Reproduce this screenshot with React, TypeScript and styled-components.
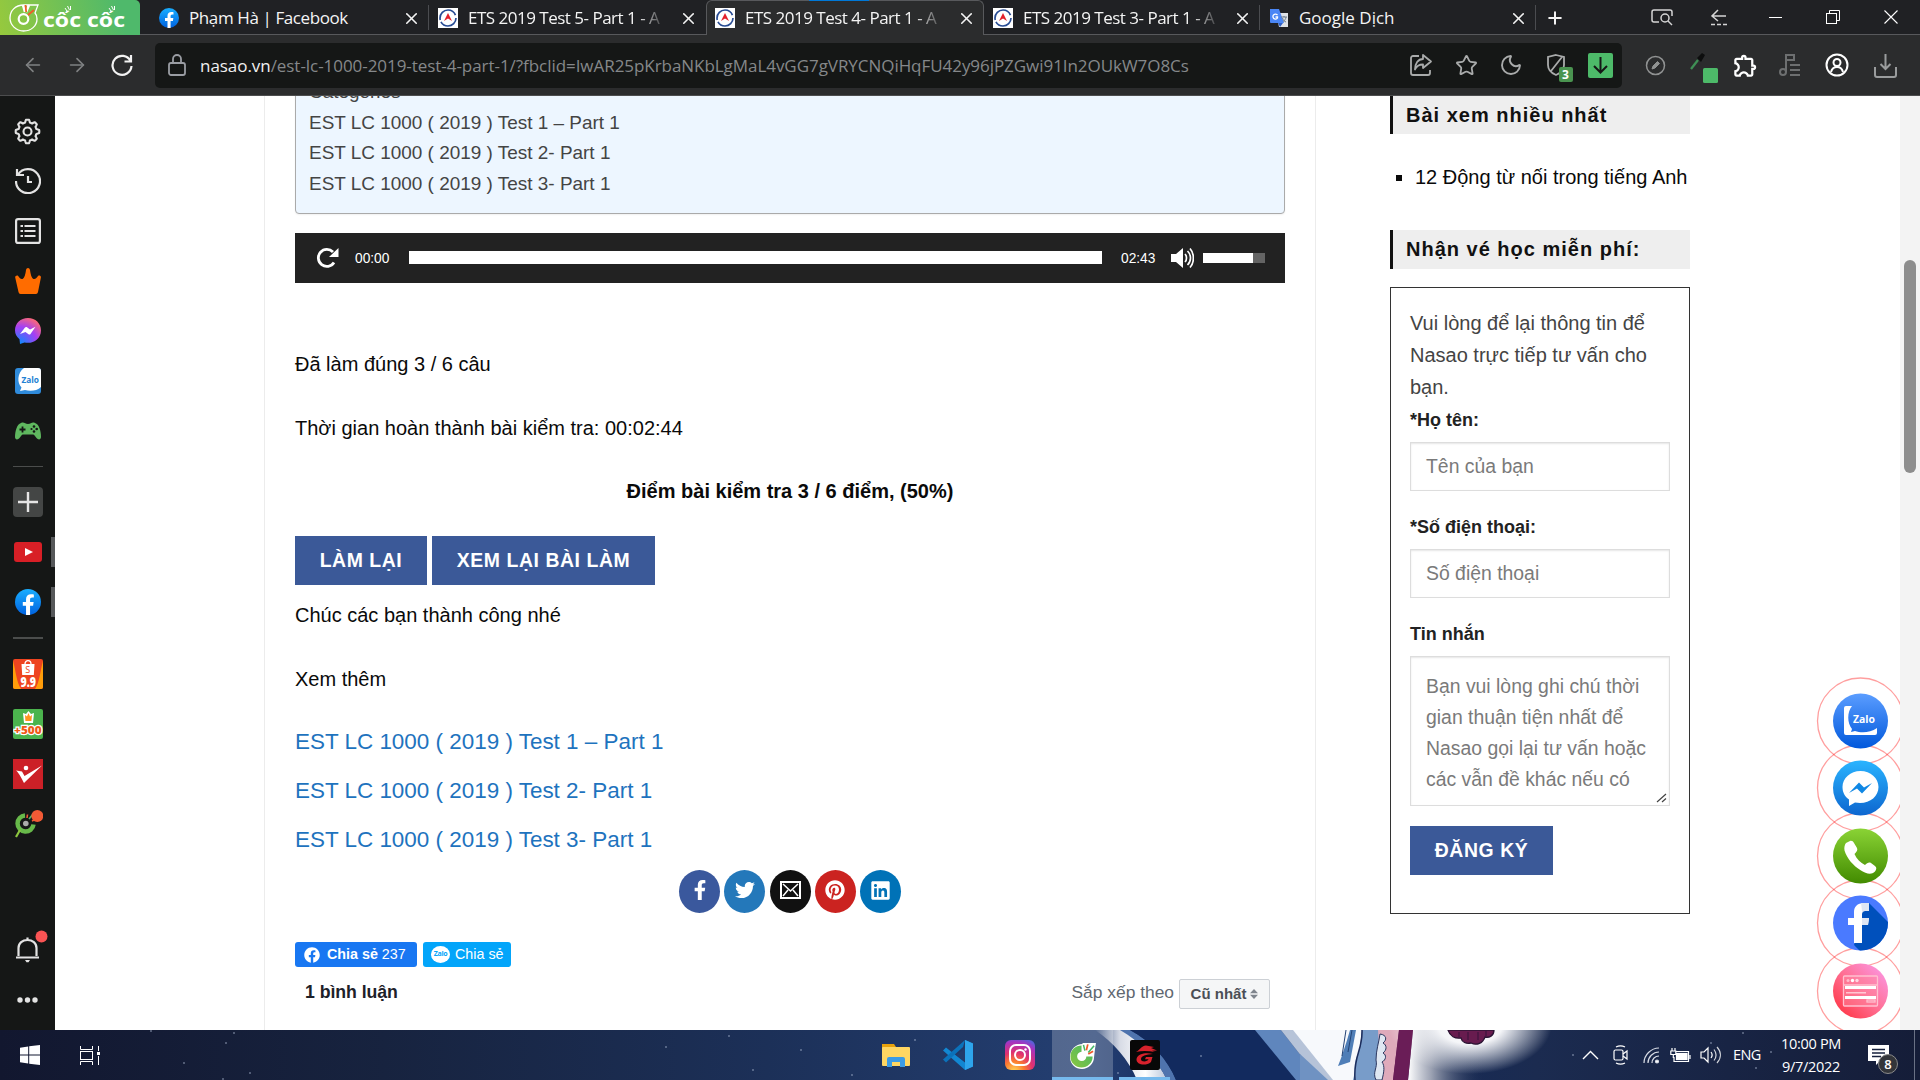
import React from "react";
import styled, { createGlobalStyle } from "styled-components";
import { FaFacebookF, FaTwitter, FaPinterest, FaLinkedin, FaFacebook } from "react-icons/fa";
import { MdOutlineExtension } from "react-icons/md";
import { Star, Moon, X, Plus, ArrowLeft, ArrowRight } from "lucide-react";

const ui = `"Open Sans", "Noto Sans", sans-serif`;
const page = `"Liberation Sans", Arial, sans-serif`;

const Global = createGlobalStyle`
  *, *::before, *::after { box-sizing: border-box; }
  html, body { margin: 0; padding: 0; overflow: hidden; background: #fff; }
  svg { display: block; flex: none; }
  a { text-decoration: none; color: inherit; }
`;

const Screen = styled.div`
  width: 1920px;
  height: 1080px;
  display: flex;
  flex-direction: column;
  overflow: hidden;
  font-family: ${page};
`;

/* ---------- tab strip ---------- */
const TabStrip = styled.header`
  height: 35px;
  display: flex;
  background: #202124;
  box-shadow: inset 0 -1px #58595c;
  flex: none;
`;
const Brand = styled.div`
  width: 140px;
  height: 35px;
  background: linear-gradient(75deg, #97c93d, #4fb96b 85%);
  border-top-right-radius: 5px;
  margin-right: 10px;
`;
const Tab = styled.div<{ $active?: boolean; $w?: number; $line?: boolean }>`
  width: ${p => p.$w ?? 277}px;
  height: 35px;
  display: flex;
  align-items: center;
  padding: ${p => (p.$active ? "0 7px 0 8px" : "1px 8px 0 9px")};
  color: #f4f4f4;
  font: 17px/28px ${ui};
  background: ${p => (p.$active ? "#2b2c2d" : "transparent")};
  border: solid #58595c;
  border-width: ${p => (p.$active ? "1px 1px 0 1px" : "0")};
  border-radius: ${p => (p.$active ? "6px 6px 0 0" : "0")};
  background-image: ${p => (p.$line ? "linear-gradient(#4b4c50, #4b4c50)" : "none")};
  background-size: 1px 25px;
  background-position: right 5px;
  background-repeat: no-repeat;
`;
const TabTitle = styled.span<{ $fade?: boolean; $ls?: number }>`
  flex: 1;
  margin: 0 10px 0 10px;
  overflow: hidden;
  white-space: nowrap;
  letter-spacing: ${p => p.$ls ?? -0.5}px;
  mask-image: ${p => (p.$fade ? "linear-gradient(90deg, #000 84%, transparent 99%)" : "none")};
`;
const LoadMark = styled.i`
  position: absolute;
  left: 809px;
  top: 0;
  width: 60px;
  height: 1px;
  background: #0078d7;
`;
const WindowButtons = styled.div`
  margin-left: auto;
  display: flex;
  align-items: center;
  padding: 0 22px 1px 0;
`;
const WinBtn = styled.span<{ $w: number }>`
  width: ${p => p.$w}px;
  display: flex;
  justify-content: flex-end;
`;

/* ---------- toolbar ---------- */
const Toolbar = styled.div`
  height: 61px;
  flex: none;
  display: flex;
  align-items: center;
  background: #2b2c2d;
  border-bottom: 1px solid #4c4d4e;
  color: #a9abab;
`;
const NavGroup = styled.div`
  width: 155px;
  display: flex;
  align-items: center;
  padding-left: 22px;
  gap: 22px;
`;
const Address = styled.div`
  width: 1467px;
  height: 45px;
  border-radius: 5px;
  background: #151716;
  display: flex;
  align-items: center;
  padding: 0 9px 0 13px;
`;
const Url = styled.div`
  flex: 1;
  margin-left: 14px;
  font: 17px/24px ${ui};
  padding-top: 1px;
  letter-spacing: -0.05px;
  color: #85888a;
  white-space: nowrap;
  b { font-weight: 400; color: #f0f0f0; }
`;
const AddressIcons = styled.div`
  display: flex;
  align-items: center;
  gap: 21.5px;
`;
const Extensions = styled.div`
  display: grid;
  grid-template-columns: 46px 44px 46px 44px 50px 46px;
  align-items: center;
  justify-items: center;
  padding-left: 10px;
`;
const Badged = styled.span`
  position: relative;
  display: block;
  padding: 0 1px;
`;
const CountBadge = styled.span`
  position: absolute;
  left: 14px;
  top: 14px;
  width: 14px;
  height: 15px;
  border-radius: 2px;
  background: #4a9450;
  color: #fff;
  font: 700 12px/15px ${ui};
  text-align: center;
`;
const GreenChip = styled.span`
  width: 25px;
  height: 25px;
  border-radius: 2px;
  background: #4dba69;
  display: grid;
  place-items: center;
`;

/* ---------- middle ---------- */
const Middle = styled.div`
  height: 934px;
  display: flex;
  flex: none;
  overflow: hidden;
`;
const SideRail = styled.nav`
  width: 55px;
  flex: none;
  background: #151716;
  padding: 10px 0 5px;
  display: flex;
  flex-direction: column;
  align-items: center;
`;
const RailCell = styled.div<{ $mark?: boolean }>`
  width: 55px;
  height: 50px;
  display: grid;
  place-items: center;
  background: ${p => (p.$mark ? "linear-gradient(#56585a, #56585a) right center / 4px 30px no-repeat" : "none")};
  flex: none;
`;
const RailRule = styled.div<{ $h: number; $t: number }>`
  height: ${p => p.$h}px;
  width: 30px;
  background: linear-gradient(#4b4d4c, #4b4d4c) center / 30px ${p => p.$t}px no-repeat;
`;
const RailGap = styled.div`
  flex: 1;
`;
const PlusTile = styled.span`
  width: 30px;
  height: 30px;
  border-radius: 4px;
  background: #444645;
  display: grid;
  place-items: center;
`;
const PageView = styled.main`
  flex: 1;
  display: flex;
  background: #fff;
  overflow: hidden;
  position: relative;
`;
const Article = styled.article`
  margin-left: 209px;
  width: 1052px;
  height: 934px;
  border: solid #ececec;
  border-width: 0 1px;
  padding: 0 30px;
  color: #0a0a0a;
  font-size: 20px;
  line-height: 32px;
  overflow: hidden;
  flex: none;
`;
const Toc = styled.div`
  width: 990px;
  height: 147px;
  margin-top: -29px;
  padding: 9.300px 13px;
  background: #edf6ff;
  border: 1px solid #aaa;
  border-radius: 4px;
  color: #444;
  font-size: 18.95px;
  line-height: 30.4px;
  box-shadow: 0 1px 2px rgba(0, 0, 0, 0.06);
`;
const TocLine = styled.a`
  display: block;
`;
const Player = styled.div`
  height: 50px;
  width: 990px;
  margin-top: 19px;
  background: #222;
  display: flex;
  align-items: center;
  padding: 0 20px 0 21px;
  color: #fff;
  font-size: 13.75px;
`;
const Time = styled.span<{ $ml: number }>`
  margin-left: ${p => p.$ml}px;
  padding-top: 2px;
  width: 35px;
  flex: none;
`;
const Track = styled.span`
  height: 13px;
  flex: 1;
  margin: 0 0 1px 19px;
  background: #fff;
`;
const Speaker = styled.svg`
  margin-left: 15px;
`;
const Volume = styled.span`
  width: 62px;
  height: 10px;
  margin-left: 9px;
  background: linear-gradient(90deg, #fff 50px, #646464 50px);
`;
const Para = styled.p<{ $mt: number; $strong?: boolean }>`
  margin: ${p => p.$mt}px 0 0;
  font-weight: ${p => (p.$strong ? 700 : 400)};
  text-align: ${p => (p.$strong ? "center" : "left")};
`;
const Buttons = styled.div<{ $mt: number }>`
  display: flex;
  gap: 5px;
  margin-top: ${p => p.$mt}px;
`;
const Button = styled.button<{ $w: number }>`
  width: ${p => p.$w}px;
  height: 49px;
  padding: 0;
  border: 0;
  background: #3b5998;
  color: #fff;
  font: 700 19.4px/47px ${page};
  letter-spacing: 0.58px;
  text-transform: uppercase;
  white-space: nowrap;
`;
const PostLinks = styled.div`
  margin-top: 22px;
`;
const PostLink = styled.a`
  display: block;
  color: #1e73be;
  font-size: 22.45px;
  line-height: 49px;
`;
const ShareRow = styled.div`
  display: flex;
  justify-content: center;
  gap: 4.2px;
  margin-top: 6px;
`;
const Round = styled.a<{ $bg: string }>`
  width: 41px;
  height: 43px;
  border-radius: 50%;
  background: ${p => p.$bg};
  display: grid;
  place-items: center;
  color: #fff;
  padding-bottom: 3px;
`;
const SmallShares = styled.div`
  display: flex;
  gap: 6px;
  margin-top: 29px;
`;
const SmallShare = styled.a<{ $bg: string; $w: number }>`
  width: ${p => p.$w}px;
  height: 25px;
  border-radius: 3px;
  padding-left: 9px;
  background: ${p => p.$bg};
  color: #fff;
  display: flex;
  align-items: center;
  font-size: 14.3px;
  line-height: 25px;
  white-space: nowrap;
  gap: 7px;
`;
const ZaloBubble = styled.span<{ $s: number }>`
  width: ${p => p.$s}px;
  height: ${p => p.$s * 0.86}px;
  margin-left: -1px;
  margin-right: -2px;
  border-radius: 50%;
  background: #fff;
  color: #03a5fa;
  font: 700 ${p => p.$s * 0.37}px/${p => p.$s * 0.84}px ${ui};
  text-align: center;
  letter-spacing: -0.3px;
`;
const Comments = styled.div`
  display: flex;
  align-items: center;
  margin-top: 12px;
  height: 30px;
  padding: 0 15px 0 10px;
  color: #1d2129;
`;
const CommentCount = styled.span`
  font-size: 17.7px;
  font-weight: 700;
  letter-spacing: -0.05px;
  padding-bottom: 4px;
`;
const Sort = styled.span`
  margin-left: auto;
  color: #606770;
  font-size: 17.4px;
  padding-bottom: 4px;
`;
const SortSelect = styled.span`
  width: 91px;
  height: 30px;
  margin-left: 5px;
  border: 1px solid #ccd0d5;
  border-radius: 2px;
  background: #f5f6f7;
  color: #4b4f56;
  font: 700 15px/28px ${page};
  display: flex;
  align-items: center;
  justify-content: center;
  gap: 4px;
`;

/* ---------- right column ---------- */
const Aside = styled.aside`
  margin-left: 74px;
  width: 300px;
  flex: none;
  color: #0a0a0a;
`;
const WidgetTitle = styled.h3<{ $mt: number; $lh: number }>`
  margin: ${p => p.$mt}px 0 0;
  height: 39px;
  padding-left: 13px;
  border-left: 3px solid #111;
  background: #eee;
  font: 700 20px/${p => p.$lh}px ${page};
  letter-spacing: 1px;
  color: #111;
  white-space: nowrap;
`;
const BulletList = styled.ul`
  list-style: none;
  margin: 27px 0 0;
  padding: 0 0 0 6px;
  font-size: 20px;
  line-height: 32px;
`;
const Bullet = styled.li`
  display: flex;
  align-items: center;
  white-space: nowrap;
  &::before {
    content: "";
    width: 6px;
    height: 6px;
    margin-right: 13px;
    margin-top: 2px;
    background: #0a0a0a;
  }
`;
const SignUp = styled.form`
  height: 627px;
  margin-top: 18px;
  padding: 19px 19px 0;
  border: 1px solid #333;
  color: #444;
  font-size: 20px;
  line-height: 32px;
`;
const Intro = styled.p`
  margin: 0;
  white-space: nowrap;
`;
const Label = styled.label<{ $mt: number }>`
  display: block;
  margin-top: ${p => p.$mt}px;
  color: #222;
  font-weight: 700;
  font-size: 18px;
  line-height: 28px;
`;
const Field = styled.div`
  height: 49px;
  width: 260px;
  margin-top: 8px;
  padding: 0 15px;
  border: 1px solid #ddd;
  box-shadow: inset 0 1px 2px rgba(0, 0, 0, 0.1);
  color: #7a7a7a;
  font-size: 19.4px;
  line-height: 47px;
`;
const MessageField = styled(Field)`
  height: 150px;
  padding: 14px 15px;
  line-height: 31px;
  white-space: nowrap;
  position: relative;
  svg { position: absolute; right: 2px; bottom: 2px; }
`;
const ScrollTrack = styled.div`
  width: 20px;
  height: 934px;
  margin-left: auto;
  background: #f3f3f3;
  padding: 164px 4px 0;
  z-index: 2;
`;
const ScrollThumb = styled.div`
  height: 213px;
  border-radius: 6px;
  background: #8d8d8d;
`;

/* floating contact buttons lie over the page */
const Contacts = styled.div`
  position: absolute;
  right: 20px;
  top: 580.5px;
  width: 84px;
  height: 354px;
  overflow: hidden;
`;

/* ---------- taskbar ---------- */
const Taskbar = styled.footer`
  height: 50px;
  flex: none;
  position: relative;
  display: flex;
  align-items: center;
  background: #16203c;
  color: #fff;
`;
const Wallpaper = styled.svg`
  position: absolute;
  inset: 0;
`;
const StartArea = styled.div`
  z-index: 1;
  display: flex;
  align-items: center;
  gap: 40px;
  padding-left: 20px;
  width: 865px;
`;
const Apps = styled.div`
  z-index: 1;
  display: flex;
  height: 50px;
`;
const AppSlot = styled.span<{ $on?: boolean; $w?: number; $ml?: number; $open?: boolean }>`
  width: ${p => p.$w ?? 62}px;
  margin-left: ${p => p.$ml ?? 0}px;
  height: 50px;
  display: grid;
  place-items: center;
  padding-top: ${p => (p.$on || p.$open ? "3px" : "0")};
  background: ${p => (p.$on ? "rgba(255,255,255,0.22)" : "transparent")};
  border-bottom: ${p => (p.$on || p.$open ? "3px solid #76b9ed" : "0")};
`;
const Tray = styled.div`
  z-index: 1;
  height: 50px;
  margin-left: auto;
  display: flex;
  align-items: center;
  font: 14.5px/24px ${ui};
  padding-right: 5px;
`;
const TrayIcon = styled.span<{ $w: number }>`
  width: ${p => p.$w}px;
  display: flex;
  justify-content: center;
`;
const Lang = styled.span`
  width: 30px;
  margin-left: 8px;
  letter-spacing: -0.6px;
`;
const Clock = styled.span`
  width: 72px;
  margin: 0 0 0 12px;
  text-align: center;
  line-height: 23px;
  letter-spacing: -0.3px;
  white-space: nowrap;
`;
const Notice = styled.span`
  position: relative;
  width: 46px;
  margin-left: 21px;
`;
const NoticeCount = styled.span`
  position: absolute;
  left: 10px;
  top: 9px;
  width: 20px;
  height: 20px;
  border-radius: 50%;
  border: 1px solid #8b8b8b;
  background: #33353a;
  font: 600 13px/18px ${ui};
  text-align: center;
`;
const DesktopEdge = styled.i`
  width: 1px;
  height: 50px;
  background: #6a7185;
`;

/* ---------- drawings ---------- */
const BrandLogo = () => (
  <svg width="140" height="35" viewBox="0 0 140 35" fill="none">
    <path d="M33 5H24C15 5 10 11 10 18s6 13 13.500 13S37 26 37 19c0-3-1-5-2-6l3-8z" stroke="#fff" strokeWidth="1.300" />
    <circle cx="23.500" cy="19" r="4.800" stroke="#fff" strokeWidth="2.200" />
    <path d="M23 5l2 7M29 5l-3 7" stroke="#fff" strokeWidth="2.600" />
    <path d="M25.500 5l.7 7M34 10l-6 5" stroke="#f15a29" strokeWidth="1.800" />
    <path d="M65 8l2 3M67.500 6l2 4M70.500 6l0 4M109 8l2 3M111.500 6l2 4M114.500 6l0 4" stroke="#fff" strokeWidth="1" />
    <text x="43" y="27" fill="#fff" fontFamily="Open Sans" fontWeight="700" fontSize="19" textLength="82" lengthAdjust="spacingAndGlyphs">cốc cốc</text>
  </svg>
);

const FbDisc = ({ s = 20 }: { s?: number }) => (
  <svg width={s} height={s} viewBox="0 0 24 24">
    <defs>
      <linearGradient id="fbg" x1="0" y1="0" x2="0" y2="1"><stop stopColor="#19aeff" /><stop offset="1" stopColor="#0062e0" /></linearGradient>
    </defs>
    <circle cx="12" cy="12" r="12" fill="url(#fbg)" />
    <path d="M16.700 15.500l.5-3.500h-3.300V9.800c0-1 .5-1.900 2-1.900h1.500V5s-1.400-.2-2.700-.2c-2.700 0-4.500 1.600-4.500 4.600V12H7.200v3.500h3V24h3.700v-8.500z" fill="#fff" />
  </svg>
);

const EtsIcon = () => (
  <svg width="20" height="20" viewBox="0 0 20 20">
    <rect width="20" height="20" fill="#fff" />
    <circle cx="10" cy="10" r="8" fill="none" stroke="#274b93" strokeWidth="1.700" strokeDasharray="21 2 24 3" />
    <path d="M10 5l4 8-4-2.500L6 13z" fill="#e3202b" />
  </svg>
);

const TranslateIcon = () => (
  <svg width="20" height="20" viewBox="0 0 20 20">
    <path d="M7 5h12v14H10z" fill="#dfe2e6" />
    <path d="M1 1h9l5 14H2a1 1 0 01-1-1z" fill="#4a86f5" />
    <path d="M9 15h5l-3 4z" fill="#2f5fc4" />
    <path d="M8.500 7.200A2.500 2.500 0 108.500 10V9H6.500" stroke="#fff" fill="none" strokeWidth="1.300" />
    <path d="M12 9h6M15 8v1M17 9c0 2-2 4-3 4.500M13.500 10c.5 2 2 3.500 3.500 4" stroke="#6c7a89" fill="none" />
  </svg>
);

const gearPath = Array.from({ length: 96 }, (_, i) => {
  const a = (i / 96) * Math.PI * 2;
  const wave = Math.max(-1, Math.min(1, Math.cos(a * 8) * 1.9));
  const r = 10.5 + wave * 1.3;
  return `${i ? "L" : "M"}${(13.5 + r * Math.sin(a)).toFixed(2)} ${(13.5 - r * Math.cos(a)).toFixed(2)}`;
}).join("") + "Z";

const Gear = () => (
  <svg width="27" height="27" viewBox="0 0 27 27" fill="none" stroke="#e3e3e3" strokeWidth="2.100" strokeLinejoin="round">
    <path d={gearPath} />
    <circle cx="13.500" cy="13.500" r="4" />
  </svg>
);

const Messenger = ({ s, id, a, b, c }: { s: number; id: string; a: string; b: string; c: string }) => (
  <svg width={s} height={s} viewBox="0 0 26 26">
    <defs>
      <radialGradient id={id} cx=".2" cy="1" r="1.100"><stop stopColor={a} /><stop offset=".6" stopColor={b} /><stop offset="1" stopColor={c} /></radialGradient>
    </defs>
    <path d="M13 0C5.500 0 0 5.400 0 12.300 0 16 1.700 19 4.500 21.200L5 26l4.500-1.600c8 2 16.500-3.500 16.500-12C26 5.400 20.500 0 13 0z" fill={`url(#${id})`} />
    <path d="M5 16l5-6.500c.5-.6 1.300-.7 2-.2l3 2.300L20.500 8.700 15.500 16c-.5.600-1.300.7-2 .2l-3-2.300z" fill="#fff" />
  </svg>
);

const ZaloTile = () => (
  <svg width="26" height="26" viewBox="0 0 26 26">
    <rect width="26" height="26" rx="3" fill="#2f8bdb" />
    <path d="M9 0h14a3 3 0 013 3v16c-4 4-11 4.500-16 3l-5 1 1.500-3.500C2 15 2 5 9 0z" fill="#fff" />
    <text x="6.500" y="14.500" fontFamily="Open Sans" fontWeight="700" fontSize="8.500" fill="#2381d3" textLength="17.500" lengthAdjust="spacingAndGlyphs">Zalo</text>
  </svg>
);

const CocMark = ({ s }: { s: number }) => (
  <svg width={s} height={s} viewBox="0 0 28 28" fill="none">
    <defs>
      <linearGradient id="coc" x1="0" y1="1" x2="1" y2="0"><stop stopColor="#8cc63f" /><stop offset="1" stopColor="#45b864" /></linearGradient>
    </defs>
    <path d="M14 2C7 2 1 8 1 15.500S7 28 13.500 28 26 22.500 26 15.500l1-8.500 1-6H14z" fill="#fff" />
    <path d="M13 3.500A11.500 11.500 0 1024.500 15H18a4.800 4.800 0 11-5-4.800z" fill="url(#coc)" />
    <path d="M15 3l1.500 6M26 4l-6 7" stroke="#45b864" strokeWidth="1.600" />
    <path d="M19.500 2.500l-1.500 6M25 9.500l-5 3" stroke="#f15a29" strokeWidth="1.800" />
  </svg>
);

const ContactButtons = () => {
  const ys = [44, 111, 179, 246, 314];
  return (
    <svg width="84" height="354" viewBox="0 0 84 354">
      <defs>
        <linearGradient id="c0" x1="0" y1="0" x2="0" y2="1"><stop stopColor="#5b9dff" /><stop offset="1" stopColor="#0058dc" /></linearGradient>
        <linearGradient id="c1" x1="0" y1="0" x2="0" y2="1"><stop stopColor="#2ab4ff" /><stop offset="1" stopColor="#0d66cf" /></linearGradient>
        <linearGradient id="c2" x1="0" y1="0" x2="0" y2="1"><stop stopColor="#8ad335" /><stop offset="1" stopColor="#428b00" /></linearGradient>
        <linearGradient id="c3"><stop stopColor="#4a7aff" /><stop offset="1" stopColor="#4a7aff" /></linearGradient>
        <linearGradient id="c4" x1="1" y1="0" x2="0" y2="1"><stop stopColor="#fb9df0" /><stop offset=".5" stopColor="#ff6f93" /><stop offset="1" stopColor="#ff2b36" /></linearGradient>
        <clipPath id="fbclip"><circle cx="44.500" cy="246" r="27.500" /></clipPath>
      </defs>
      {ys.map(y => <circle key={y} cx="44.500" cy={y} r="43" fill="none" stroke="#ff0000" strokeOpacity=".38" strokeWidth="1.300" />)}
      {ys.map((y, i) => <circle key={y} cx="44.500" cy={y} r="27.500" fill={`url(#c${i})`} />)}
      <path d="M36 29h-6a2 2 0 00-2 2v25a2 2 0 002 2h29a2 2 0 002-2v-5c-7 5-16 5-22 3l-4 1 1-3c-5-6-5-17 0-23z" fill="#fff" />
      <text x="37" y="46" fill="#fff" fontFamily="Open Sans" fontWeight="700" fontSize="11" textLength="22" lengthAdjust="spacingAndGlyphs">Zalo</text>
      <path d="M44.500 94c-10 0-18 7-18 16 0 5 2 9.500 6.500 12.500V129l6-3.500c13 2.500 23.500-5 23.500-15.500 0-9-8-16-18-16z" fill="#fff" />
      <path d="M33 116l10-10.500 5 5 8-4.500-10 10.500-5-5z" fill="#0f87e4" />
      <path d="M30 166l4-2c2-.5 3 .5 4 2l3 5c1 2-.5 4-2.500 6 2 5 6 8.500 10.500 11 2-2 4-3 6-2l4 3c2 1.500 1.500 3.500 0 5.500-4 4-9 2-14-1-8-5-14-12-16.500-20-.5-3 0-5.500 1.500-7.500z" fill="#fff" />
      <g clipPath="url(#fbclip)">
        <path d="M53 226l20 20v30H46l-8-8 7-21-12-1z" fill="#0050bc" />
      </g>
      <path d="M53 226h-5c-7 0-10 4-10 9v6h-6v7h6v18h8v-18h6l1-7h-7v-4c0-2 1-3 3-3h4z" fill="#fff" />
      <path d="M45 226h8v8h-4c-2 0-3 1-3 3v4h7l-1 7h-6V234z" fill="#dfe6f3" />
      <g fill="none" stroke="#ffc0cf" strokeWidth="1.300">
        <rect x="27.500" y="299" width="34" height="30" rx="1" fill="#ff8ba3" fillOpacity=".4" />
        <path d="M28 308h33" />
        <rect x="51" y="323" width="8" height="2" />
      </g>
      <g fill="#fff"><rect x="29" y="309" width="31" height="3" /><rect x="29" y="319" width="31" height="3" /><circle cx="36.500" cy="303.500" r="1.700" /><circle cx="32" cy="303.500" r="1.500" opacity=".5" /><circle cx="41" cy="303.500" r="1.700" opacity=".7" /><rect x="30" y="315" width="20" height="1.500" opacity=".6" /></g>
    </svg>
  );
};

const stars = [[151, 1], [234, 3], [226, 13], [184, 33], [250, 43], [223, 49], [666, 17], [753, 40], [801, 20], [729, 6], [852, 45], [915, 10], [1118, 43], [1201, 26], [1711, 13], [1743, 3], [1771, 22], [1573, 25], [1756, 38]];

const WallpaperArt = () => (
  <Wallpaper width="1920" height="50" viewBox="0 0 1920 50">
    <defs>
      <linearGradient id="sky"><stop stopColor="#12172f" /><stop offset=".2" stopColor="#17233f" /><stop offset=".4" stopColor="#1c3058" /><stop offset=".57" stopColor="#243f72" /><stop offset=".62" stopColor="#14295c" /><stop offset=".7" stopColor="#13295a" /><stop offset=".8" stopColor="#1b2b50" /><stop offset="1" stopColor="#151d38" /></linearGradient>
      <linearGradient id="beam"><stop stopColor="#fff" stopOpacity="0" /><stop offset=".35" stopColor="#d8dce6" /><stop offset=".7" stopColor="#fff" /><stop offset="1" stopColor="#b9c6db" /></linearGradient>
      <linearGradient id="haze"><stop stopColor="#fff" /><stop offset=".3" stopColor="#b4b8c4" stopOpacity=".85" /><stop offset="1" stopColor="#1b2b50" stopOpacity="0" /></linearGradient>
      <radialGradient id="glow"><stop stopColor="#fff" /><stop offset=".4" stopColor="#f4f5f8" /><stop offset="1" stopColor="#fff" stopOpacity="0" /></radialGradient>
    </defs>
    <rect width="1920" height="50" fill="url(#sky)" />
    <path d="M1095 0h28c20 14 36 32 44 50h-30c-8-20-24-38-42-50z" fill="url(#beam)" />
    <path d="M1120 0h10c22 12 38 30 46 50h-9c-10-20-26-38-47-50z" fill="#4f74ae" />
    <path d="M1130 0h125l45 50h-124c-8-20-24-38-46-50z" fill="#122a5e" />
    <path d="M1255 0h26l39 50h-24z" fill="#5f86bd" />
    <path d="M1281 0h81l-6 50h-36z" fill="#f7f9fc" />
    <path d="M1281 0h12l40 50h-13z" fill="#3d5f96" opacity=".35" />
    <path d="M1300 24l28 26h-28z" fill="#6f92c2" />
    <path d="M1350 0c-4 14-8 26-12 36l12-4 6-32z" fill="#4f7eb7" />
    <path d="M1346 0l-4 26M1352 0l-4 22" stroke="#234274" fill="none" />
    <path d="M1362 0h22l-4 50h-27c3-10 0-14 4-24 4-8 4-14 5-26z" fill="#789cc9" />
    <path d="M1362 0c1 20-9 26-7 50" stroke="#1c2d5c" strokeWidth="1.500" fill="none" />
    <path d="M1378 0h24l-6 50h-15z" fill="#dfaabb" />
    <path d="M1380 4c7 1 7 6 3 9 4 2 4 7 0 10 4 2 3 7-1 9 3 4 2 10 0 18h-6c-4-8 2-12 0-20 0-10 3-18 4-26z" fill="#dfe7f2" stroke="#2a365f" />
    <path d="M1399 0h14l-5 50h-15z" fill="#6a1d57" />
    <path d="M1413 0h72v50h-77z" fill="url(#haze)" />
    <ellipse cx="1470" cy="-6" rx="82" ry="50" fill="url(#glow)" />
    <path d="M1399 0h14l-5 50h-15z" fill="#6a1d57" />
    <path d="M1448 0h46c0 6-5 8-9 7-2 6-8 9-14 6-5 1-9-1-10-5-6 1-11-2-13-8z" fill="#681c4f" stroke="#2b1434" strokeWidth="1.300" />
    <path d="M1459 2v5M1468 2v8M1478 2v8M1486 1v5" stroke="#35123a" fill="none" />
    {stars.map(([x, y]) => (
      <circle key={`${x}-${y}`} cx={x} cy={y} r="1" fill="#b6c3dc" opacity=".5" />
    ))}
  </Wallpaper>
);

const LockIcon = () => (
  <svg width="18" height="22" viewBox="0 0 18 22" fill="none" stroke="#9a9da3" strokeWidth="1.800"><rect x="1" y="9" width="16" height="12" rx="2" /><path d="M5 9V5a4 4 0 018 0v4" /></svg>
);
const Person = () => (
  <svg width="24" height="24" viewBox="0 0 24 24" fill="none" stroke="#fff" strokeWidth="2"><circle cx="12" cy="12" r="10.500" /><circle cx="12" cy="9.500" r="3.500" /><path d="M6 19c1-4 3-5 6-5s5 1 6 5" /></svg>
);
const CloseX = () => <X size={19} strokeWidth={2} />;

const tests = ["EST LC 1000 ( 2019 ) Test 1 – Part 1", "EST LC 1000 ( 2019 ) Test 2- Part 1", "EST LC 1000 ( 2019 ) Test 3- Part 1"];

export default function App() {
  return (
    <Screen>
      <Global />
      <TabStrip>
        <Brand><BrandLogo /></Brand>
        <Tab $line $w={279}><FbDisc /><TabTitle $ls={-0.4}>Phạm Hà | Facebook</TabTitle><CloseX /></Tab>
        <Tab><EtsIcon /><TabTitle $fade>ETS 2019 Test 5- Part 1 - A</TabTitle><CloseX /></Tab>
        <Tab $active $w={278}><EtsIcon /><TabTitle $fade>ETS 2019 Test 4- Part 1 - A</TabTitle><CloseX /></Tab>
        <Tab $line $w={276}><EtsIcon /><TabTitle $fade>ETS 2019 Test 3- Part 1 - A</TabTitle><CloseX /></Tab>
        <Tab $line $w={276}><TranslateIcon /><TabTitle $ls={0}>Google Dịch</TabTitle><CloseX /></Tab>
        <Tab $w={40}><Plus size={20} strokeWidth={2.4} /></Tab>
        <LoadMark />
        <WindowButtons>
          <WinBtn $w={24}><svg width="22" height="17" viewBox="0 0 22 17" fill="none" stroke="#d5d5d5" strokeWidth="1.500"><path d="M8 13H3a2 2 0 01-2-2V3a2 2 0 012-2h16a2 2 0 012 2v4" /><circle cx="14" cy="9" r="4" /><path d="M17 12l4 4" /></svg></WinBtn>
          <WinBtn $w={55}><svg width="18" height="17" viewBox="0 0 18 17" fill="none" stroke="#d5d5d5" strokeWidth="1.500"><path d="M16 7H2M8 1L2 7l6 5" /><path d="M1 15.500h4M7 15.500h4M13 15.500h4" /></svg></WinBtn>
          <WinBtn $w={54}><svg width="13" height="13" viewBox="0 0 13 13"><path d="M0 6.500h13" stroke="#fff" /></svg></WinBtn>
          <WinBtn $w={58}><svg width="14" height="14" viewBox="0 0 14 14" fill="none" stroke="#fff"><rect x=".5" y="3.500" width="10" height="10" /><path d="M3.500 3V.5h10v10H11" /></svg></WinBtn>
          <WinBtn $w={58}><svg width="14" height="14" viewBox="0 0 14 14" stroke="#fff" strokeWidth="1.100"><path d="M.5.5l13 13M13.500.5l-13 13" /></svg></WinBtn>
        </WindowButtons>
      </TabStrip>
      <Toolbar>
        <NavGroup>
          <ArrowLeft size={22} strokeWidth={1.8} color="#7f8182" />
          <ArrowRight size={22} strokeWidth={1.8} color="#7f8182" />
          <svg width="24" height="24" viewBox="0 0 24 24" fill="none" stroke="#f2f2f2" strokeWidth="2.200"><path d="M20.500 8A9.500 9.500 0 1021.500 13M21 2v6.500h-6.500" /></svg>
        </NavGroup>
        <Address>
          <LockIcon />
          <Url><b>nasao.vn</b>/est-lc-1000-2019-test-4-part-1/?fbclid=IwAR25pKrbaNKbLgMaL4vGG7gVRYCNQiHqFU42y96jPZGwi91In2OUkW7O8Cs</Url>
          <AddressIcons>
            <svg width="24" height="24" viewBox="0 0 24 24" fill="none" stroke="#a9abab" strokeWidth="1.800"><path d="M10 3H4a2 2 0 00-2 2v15a2 2 0 002 2h15a2 2 0 002-2v-3" /><path d="M14 2l8 6.500-8 6.500v-3.500c-4 0-6.500 1.500-8 5 0-6 3-10.500 8-10.500z" strokeLinejoin="round" /></svg>
            <Star size={23} strokeWidth={1.9} />
            <Moon size={24} strokeWidth={1.9} />
            <Badged>
              <svg width="20" height="24" viewBox="0 0 20 24" fill="none" stroke="#a9abab" strokeWidth="1.800"><path d="M10 2l8 2v8c0 4-3 8-8 10-5-2-8-6-8-10V4zM16 4L5 18" /></svg>
              <CountBadge>3</CountBadge>
            </Badged>
            <GreenChip><svg width="15" height="18" viewBox="0 0 15 18" fill="none" stroke="#151716" strokeWidth="2"><path d="M7.500 1v15M1 10l6.500 6.500L14 10" /></svg></GreenChip>
          </AddressIcons>
        </Address>
        <Extensions>
          <svg width="21" height="21" viewBox="0 0 21 21" fill="none" stroke="#909292" strokeWidth="1.500"><circle cx="10.500" cy="10.500" r="9" /><path d="M7 14l1-3 4.500-4.500 2 2L10 13z" fill="#909292" strokeWidth="1" /></svg>
          <svg width="36" height="36" viewBox="0 0 36 36"><path d="M9 22l7-9" stroke="#3f8f55" strokeWidth="2.300" /><path d="M15 11l4 4 4-7-3-2z" fill="#0d0e0e" /><rect x="21" y="21" width="15" height="15" rx="1.500" fill="#4dba69" /></svg>
          <MdOutlineExtension size={27} color="#fff" />
          <svg width="22" height="24" viewBox="0 0 22 24" fill="none" stroke="#6d6f70" strokeWidth="2"><circle cx="4" cy="19" r="3" /><path d="M7 19V2h8v5H7M11 12h10M11 17h10M11 22h10" /></svg>
          <Person />
          <svg width="23" height="25" viewBox="0 0 23 25" fill="none" stroke="#9a9c9d" strokeWidth="2"><path d="M1 14v8a2 2 0 002 2h17a2 2 0 002-2v-8M11.500 1v15M6.500 11l5 5 5-5" /></svg>
        </Extensions>
      </Toolbar>

      <Middle>
        <SideRail>
          <RailCell><Gear /></RailCell>
          <RailCell><svg width="26" height="26" viewBox="0 0 26 26" fill="none" stroke="#e3e3e3" strokeWidth="2.200"><path d="M1 13a12 12 0 102-6.500M2 1v6h7M13 8v6h4" /></svg></RailCell>
          <RailCell><svg width="26" height="26" viewBox="0 0 26 26" fill="none" stroke="#e3e3e3" strokeWidth="2.200"><rect x="1.100" y="1.100" width="23.800" height="23.800" rx="2" /><path d="M5.500 8h2.500M9.500 8h11M5.500 13h2.500M9.500 13h11M5.500 18h2.500M9.500 18h11" /></svg></RailCell>
          <RailCell><svg width="26" height="26" viewBox="0 0 26 26" fill="#ff6c00"><path d="M13 0c1 0 1.700.7 2 2 .6 4 1.500 8 3.500 9 2 .5 3.500-1.500 4.500-3 1.200-1 3.300 0 2.900 1.500L23 24c-.3 1.200-1 2-2 2H5.500c-1 0-1.700-.8-2-2L.2 9.500C0 8 2 7 3.200 8c1 1.500 2.300 3.500 4.300 3C9.500 10 10.500 6 11 2c.3-1.300 1-2 2-2z" /></svg></RailCell>
          <RailCell><Messenger s={26} id="m1" a="#0a8cff" b="#a43ff5" c="#ff6a72" /></RailCell>
          <RailCell><ZaloTile /></RailCell>
          <RailCell><svg width="26" height="18" viewBox="0 0 26 18"><path d="M6 1c3-1.500 4 1 7 1s4-2.500 7-1c4 1 6 8 6 14 0 3-3 3-4.500 1-1.500-1.500-2-3.500-3.500-3.500H8C6.500 12.500 6 14.500 4.500 16 3 18 0 18 0 15 0 9 2 2 6 1z" fill="#5fb85f" /><path d="M7.500 4.500v6M4.500 7.500h6" stroke="#151716" strokeWidth="1.800" /><g fill="#151716"><circle cx="19" cy="4.500" r="1.300" /><circle cx="19" cy="9.500" r="1.300" /><circle cx="16.500" cy="7" r="1.100" /><circle cx="21.700" cy="7" r="1.300" /></g></svg></RailCell>
          <RailRule $h={21} $t={1} />
          <RailCell><PlusTile><svg width="20" height="20" viewBox="0 0 20 20" stroke="#e5e5e5" strokeWidth="2.400"><path d="M10 0v20M0 10h20" /></svg></PlusTile></RailCell>
          <RailCell $mark><svg width="28" height="20" viewBox="0 0 28 20"><rect width="28" height="20" rx="3" fill="#d81f26" /><path d="M11 6l8 4-8 4z" fill="#fff" /></svg></RailCell>
          <RailCell $mark><FbDisc s={26} /></RailCell>
          <RailRule $h={22} $t={2} />
          <RailCell><svg width="30" height="30" viewBox="0 0 30 30"><rect width="30" height="30" rx="2" fill="#ee4420" /><path d="M0 2c3 10 3 20 8 28H2a2 2 0 01-2-2zM30 2c-3 10-3 20-8 28h6a2 2 0 002-2z" fill="#ff9d0a" /><path d="M8.500 5h13l-.7 11H9.200z" fill="#fff" /><path d="M12 5c0-4.500 6-4.500 6 0" fill="none" stroke="#fff" strokeWidth="1.300" /><text x="12.300" y="14" fontFamily="Open Sans" fontSize="9" fill="#ee4420">S</text><text x="7.500" y="27.500" fontFamily="Open Sans" fontWeight="800" fontSize="13.500" fill="#fff" textLength="15.500" lengthAdjust="spacingAndGlyphs">9.9</text></svg></RailCell>
          <RailCell><svg width="30" height="30" viewBox="0 0 30 30"><rect width="30" height="30" rx="2" fill="#4bb44d" /><path d="M10 4l3 1 2.500-3L18 5l3-1-1 10h-9z" fill="#fff" /><path d="M12 6l2 1.500L15.500 4 17 7.500 19 6l-.6 6h-6z" fill="#ff9420" /><text x="1" y="25" fontFamily="Open Sans" fontWeight="800" fontSize="11" fill="#f05a16" stroke="#fff" strokeWidth="2.400" paintOrder="stroke" textLength="27.500" lengthAdjust="spacingAndGlyphs">+500</text></svg></RailCell>
          <RailCell><svg width="30" height="30" viewBox="0 0 30 30"><rect width="30" height="30" fill="#cc2027" /><path d="M3 11.500l6 1L11.500 17 29 6.500 11 24C9 20 6 14 3 11.500z" fill="#fff" /><circle cx="13" cy="9" r="2.300" fill="#fff" /></svg></RailCell>
          <RailCell><svg width="30" height="30" viewBox="0 0 30 30" fill="none"><path d="M12 6.500a8 8 0 108.500 9" stroke="#67b94a" strokeWidth="4.500" /><path d="M7 21l-4 7" stroke="#8cc63f" strokeWidth="2.200" /><path d="M16 10l4-5" stroke="#4dba69" strokeWidth="1.600" /><path d="M14 9l.5-3.500M19 12l4-2" stroke="#f15a35" strokeWidth="1.600" /><circle cx="12.800" cy="14.500" r="2.800" fill="#aaa" /><circle cx="24.300" cy="7" r="6" fill="#f15a35" /></svg></RailCell>
          <RailGap />
          <RailCell><svg width="42" height="40" viewBox="0 0 42 40" fill="none"><path d="M11.500 26V18c0-5 4-8 9-8s9 3 9 8v8M9 27.500h23M20.500 7.500v2" stroke="#e3e3e3" strokeWidth="2.200" /><path d="M18 30h5l-1.500 2.200h-2z" fill="#e3e3e3" /><circle cx="34.500" cy="6.500" r="6" fill="#fa5454" /></svg></RailCell>
          <RailCell><svg width="21" height="6" viewBox="0 0 21 6" fill="#e3e3e3"><circle cx="3" cy="3" r="2.700" /><circle cx="10.500" cy="3" r="2.700" /><circle cx="18" cy="3" r="2.700" /></svg></RailCell>
        </SideRail>

        <PageView>
          <Article>
            <Toc>
              <TocLine>Categories</TocLine>
              {tests.map(t => <TocLine key={t}>{t}</TocLine>)}
            </Toc>
            <Player>
              <svg width="23" height="22" viewBox="0 0 23 22" fill="none"><path d="M18 15.500A8.500 8.500 0 1117 5" stroke="#fff" strokeWidth="2.800" /><path d="M22.500 1v9H13z" fill="#fff" /></svg>
              <Time $ml={16}>00:00</Time>
              <Track />
              <Time $ml={19}>02:43</Time>
              <Speaker width="23" height="22" viewBox="0 0 23 22" fill="none"><path d="M0 7h5l7-6v20l-7-6H0z" fill="#fff" /><path d="M14 7c2 2 2 6 0 8M16.500 4c4 4 4 10 0 14M19 1.500c4.500 5 4.500 14 0 19" stroke="#fff" strokeWidth="1.700" /></Speaker>
              <Volume />
            </Player>
            <Para $mt={65}>Đã làm đúng 3 / 6 câu</Para>
            <Para $mt={32}>Thời gian hoàn thành bài kiểm tra: 00:02:44</Para>
            <Para $mt={31} $strong>Điểm bài kiểm tra 3 / 6 điểm, (50%)</Para>
            <Buttons $mt={29}>
              <Button $w={132}>Làm lại</Button>
              <Button $w={223}>Xem lại bài làm</Button>
            </Buttons>
            <Para $mt={14}>Chúc các bạn thành công nhé</Para>
            <Para $mt={32}>Xem thêm</Para>
            <PostLinks>{tests.map(t => <PostLink key={t}>{t}</PostLink>)}</PostLinks>
            <ShareRow>
              <Round $bg="#3a589d"><FaFacebookF size={20} /></Round>
              <Round $bg="#2478ba"><FaTwitter size={20} /></Round>
              <Round $bg="#111"><svg width="21" height="18" viewBox="0 0 21 18" fill="none" stroke="#fff" strokeWidth="2"><rect x="1" y="1" width="19" height="16" /><path d="M3 3l7.500 7L18 3M3 15l5-6M18 15l-5-6" strokeWidth="1.500" /></svg></Round>
              <Round $bg="#cb2320"><FaPinterest size={20} /></Round>
              <Round $bg="#0072b7"><FaLinkedin size={21} /></Round>
            </ShareRow>
            <SmallShares>
              <SmallShare $bg="#1877f2" $w={122}><FaFacebook size={16} /><span><b>Chia sẻ</b> 237</span></SmallShare>
              <SmallShare $bg="#03a5fa" $w={88}><ZaloBubble $s={19}>Zalo</ZaloBubble><span>Chia sẻ</span></SmallShare>
            </SmallShares>
            <Comments>
              <CommentCount>1 bình luận</CommentCount>
              <Sort>Sắp xếp theo</Sort>
              <SortSelect>Cũ nhất<svg width="8" height="10" viewBox="0 0 8 10" fill="#7f858d"><path d="M4 0l4 4.300H0zM4 10l4-4.300H0z" /></svg></SortSelect>
            </Comments>
          </Article>

          <Aside>
            <WidgetTitle $mt={-1} $lh={40}>Bài xem nhiều nhất</WidgetTitle>
            <BulletList><Bullet>12 Động từ nối trong tiếng Anh</Bullet></BulletList>
            <WidgetTitle $mt={37} $lh={39}>Nhận vé học miễn phí:</WidgetTitle>
            <SignUp>
              <Intro>Vui lòng để lại thông tin để<br />Nasao trực tiếp tư vấn cho<br />bạn.</Intro>
              <Label $mt={3}>*Họ tên:</Label>
              <Field>Tên của bạn</Field>
              <Label $mt={22}>*Số điện thoại:</Label>
              <Field>Số điện thoại</Field>
              <Label $mt={22}>Tin nhắn</Label>
              <MessageField>
                Bạn vui lòng ghi chú thời<br />gian thuận tiện nhất để<br />Nasao gọi lại tư vấn hoặc<br />các vẫn đề khác nếu có
                <svg width="11" height="11" viewBox="0 0 11 11" stroke="#444" strokeWidth="1.200"><path d="M1 10l9-8M6 10l4-3.500" /></svg>
              </MessageField>
              <Buttons $mt={20}><Button $w={143}>Đăng ký</Button></Buttons>
            </SignUp>
          </Aside>
          <ScrollTrack><ScrollThumb /></ScrollTrack>
          <Contacts><ContactButtons /></Contacts>
        </PageView>
      </Middle>

      <Taskbar>
        <WallpaperArt />
        <StartArea>
          <svg width="20" height="20" viewBox="0 0 20 20" fill="#fff"><path d="M0 2.700l8.200-1.200v8H0zM9.200 1.300L20 0v9.500H9.200zM0 10.500h8.200v8L0 17.300zM9.200 10.500H20V20L9.200 18.700z" /></svg>
          <svg width="20" height="19" viewBox="0 0 20 19" fill="none" stroke="#fff" strokeWidth="1"><path d="M.5 0v3.500h12V0M.5 19v-3.500h12V19" /><rect x=".5" y="5.500" width="12" height="8" /><path d="M18.500 0v5M18.500 10v9" /><rect x="17.500" y="6.500" width="2" height="2" fill="#fff" /></svg>
        </StartArea>
        <Apps>
          <AppSlot><svg width="28" height="25" viewBox="0 0 28 25"><path d="M0 1h12l2 3v4H0z" fill="#e8a20c" /><rect y="4" width="28" height="19" rx="1" fill="#ffd662" /><path d="M5 24v-8a2 2 0 012-2h14a2 2 0 012 2v8h-5v-5h-8v5z" fill="#3b9be5" /></svg></AppSlot>
          <AppSlot><svg width="30" height="30" viewBox="0 0 30 30"><path d="M22 0l8 3.500v23L22 30 0 10.500l3-3 19 15z" fill="#1287d2" /><path d="M22 0l-2 7L3 22.500l-3-3z" fill="#0b72bb" /><path d="M22 0l8 3.500v23L22 30z" fill="#2ea5ec" /><path d="M22 8v14l-9-7z" fill="#223c6c" /></svg></AppSlot>
          <AppSlot><svg width="30" height="30" viewBox="0 0 30 30" fill="none"><defs><radialGradient id="ig" cx=".3" cy="1.050" r="1.150"><stop stopColor="#ffd95a" /><stop offset=".3" stopColor="#fb7c30" /><stop offset=".55" stopColor="#e0316f" /><stop offset=".85" stopColor="#a534c0" /><stop offset="1" stopColor="#5a5fd8" /></radialGradient></defs><rect width="30" height="30" rx="6" fill="url(#ig)" /><rect x="5" y="5" width="20" height="20" rx="6" stroke="#fff" strokeWidth="2" /><circle cx="15" cy="15" r="5" stroke="#fff" strokeWidth="2" /><circle cx="20.500" cy="9.500" r="1.200" fill="#fff" /></svg></AppSlot>
          <AppSlot $on $w={61} $ml={1}><CocMark s={27} /></AppSlot>
          <AppSlot $open $w={51} $ml={6}><svg width="30" height="30" viewBox="0 0 30 30"><rect width="30" height="30" rx="2" fill="#080808" /><path d="M6 12c4-2 5-6 10-6.500l8 1.500-3 1 6 2.500-5 .2 3 1.300c-6-1-13-1.500-19 0z" fill="#d8222c" /><path d="M23 14c-6-1.500-15-1-16.500 5C6 25 16 26.500 21 22l1.500-5H16l-1 2.200h3.500c-1 2.800-7.500 3-7.500 0C11 16 16 14.500 23 14z" fill="#d8222c" /></svg></AppSlot>
        </Apps>
        <Tray>
          <TrayIcon $w={31}><svg width="17" height="10" viewBox="0 0 17 10" fill="none" stroke="#fff" strokeWidth="1.400"><path d="M1 9l7.500-7.500L16 9" /></svg></TrayIcon>
          <TrayIcon $w={30}><svg width="16" height="20" viewBox="0 0 16 20" fill="none" stroke="#fff" strokeWidth="1.200"><rect x="1" y="5" width="9" height="10" rx="1.500" /><path d="M10 9l4-3v8l-4-3M3 2c3-1.500 6-1.500 9 0M3 18c3 1.500 6 1.500 9 0" /></svg></TrayIcon>
          <TrayIcon $w={30}><svg width="17" height="17" viewBox="0 0 17 17" fill="none" stroke="#d9dde6" strokeWidth="1.200"><path d="M1 16C1 8 8 1 16 1M5 16C5 10 10 5 16 5M9 16c0-4 3-7 7-7" /><circle cx="14" cy="14.500" r="1.500" fill="#fff" /></svg></TrayIcon>
          <TrayIcon $w={29}><svg width="21" height="15" viewBox="0 0 21 15" fill="none" stroke="#fff" strokeWidth="1.200"><path d="M6 3.500h12.500v10H4V9M2 0v3M5 0v3M.8 3h5v3.500h-5zM3.300 6.500V10M20 7v4" /><rect x="6.500" y="5.500" width="10.500" height="6" fill="#fff" /></svg></TrayIcon>
          <TrayIcon $w={30}><svg width="21" height="18" viewBox="0 0 21 18" fill="none" stroke="#fff" strokeWidth="1.200"><path d="M1 6h3l4-4v14l-4-4H1zM11 6c1.500 2 1.500 4 0 6" /><path d="M14 3.500c3 4 3 7 0 11M17 1c4.500 5 4.500 11 0 16" opacity=".8" /></svg></TrayIcon>
          <Lang>ENG</Lang>
          <Clock>10:00 PM<br />9/7/2022</Clock>
          <Notice>
            <svg width="21" height="20" viewBox="0 0 21 20" fill="none"><path d="M0 0h21v16h-9l-4 4v-4H0z" fill="#fff" /><path d="M4 4.500h13M4 8h13M4 11.500h9" stroke="#16203c" strokeWidth="1.300" /></svg>
            <NoticeCount>8</NoticeCount>
          </Notice>
          <DesktopEdge />
        </Tray>
      </Taskbar>
    </Screen>
  );
}
